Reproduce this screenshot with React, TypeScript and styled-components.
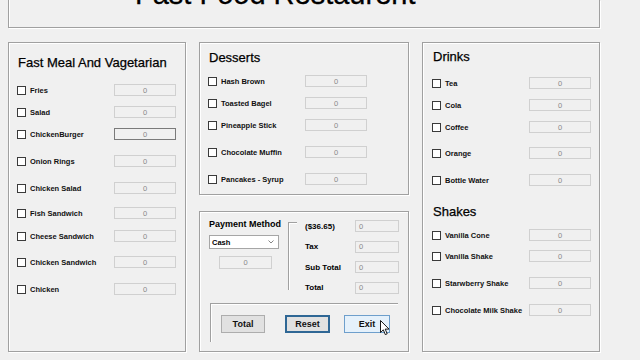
import React from 'react';
import styled, { createGlobalStyle } from 'styled-components';

type Item = { name: string; gap: number; active?: boolean };
type Section = { title: string; gap: number; items: Item[] };

const meals: Section[] = [
  {
    title: 'Fast Meal And Vagetarian',
    gap: 12,
    items: [
      { name: 'Fries', gap: 12 },
      { name: 'Salad', gap: 8 },
      { name: 'ChickenBurger', gap: 8, active: true },
      { name: 'Onion Rings', gap: 13 },
      { name: 'Chicken Salad', gap: 13 },
      { name: 'Fish Sandwich', gap: 11 },
      { name: 'Cheese Sandwich', gap: 9 },
      { name: 'Chicken Sandwich', gap: 12 },
      { name: 'Chicken', gap: 13 },
    ],
  },
];

const desserts: Section[] = [
  {
    title: 'Desserts',
    gap: 7,
    items: [
      { name: 'Hash Brown', gap: 8 },
      { name: 'Toasted Bagel', gap: 8 },
      { name: 'Pineapple Stick', gap: 8 },
      { name: 'Chocolate Muffin', gap: 13 },
      { name: 'Pancakes - Syrup', gap: 13 },
    ],
  },
];

const drinks: Section[] = [
  {
    title: 'Drinks',
    gap: 6,
    items: [
      { name: 'Tea', gap: 11 },
      { name: 'Cola', gap: 8 },
      { name: 'Coffee', gap: 8 },
      { name: 'Orange', gap: 12 },
      { name: 'Bottle Water', gap: 13 },
    ],
  },
  {
    title: 'Shakes',
    gap: 17,
    items: [
      { name: 'Vanilla Cone', gap: 8 },
      { name: 'Vanilla Shake', gap: 7 },
      { name: 'Starwberry Shake', gap: 13 },
      { name: 'Chocolate Milk Shake', gap: 13 },
    ],
  },
];

const totals = ['($36.65)', 'Tax', 'Sub Total', 'Total'];

const GlobalStyle = createGlobalStyle`
  html, body {
    margin: 0;
    padding: 0;
    background: #f0f0f0;
  }
  body {
    font-family: "Liberation Sans", Arial, sans-serif;
  }
`;

const Screen = styled.div`
  width: 640px;
  height: 360px;
  overflow: hidden;
  background: #f0f0f0;
  color: #000;
`;

const TitlePanel = styled.header`
  display: flex;
  box-sizing: border-box;
  margin-left: 8px;
  width: 592px;
  height: 28px;
  padding-left: 126px;
  border: 1px solid #a0a0a0;
  border-top: none;
  box-shadow: inset 1px 0 0 #fff, 1px 1px 0 #fff;
  overflow: hidden;
`;

const Title = styled.h1`
  margin: -20px 0 0;
  font-size: 29px;
  font-weight: normal;
  line-height: 1;
  white-space: nowrap;
  -webkit-text-stroke: 0.3px #000;
`;

const Columns = styled.main`
  display: grid;
  grid-template-columns: 178px 210px 178px;
  column-gap: 13px;
  margin: 14px 0 0 8px;
  height: 310px;
`;

const Stack = styled.div`
  display: flex;
  flex-direction: column;
  gap: 16px;
`;

const GroupBox = styled.section<{ $padX?: number; $height?: number; $grow?: boolean }>`
  box-sizing: border-box;
  display: flex;
  flex-direction: column;
  padding: 0 0 0 ${p => p.$padX ?? 8}px;
  border: 1px solid #a0a0a0;
  box-shadow: inset 1px 1px 0 #fff, 1px 1px 0 #fff;
  ${p => (p.$height ? `height: ${p.$height}px;` : '')}
  ${p => (p.$grow ? 'flex: 1;' : '')}
`;

const Heading = styled.h2<{ $gap: number }>`
  margin: ${p => p.$gap}px 0 0 1px;
  font-size: 13px;
  font-weight: normal;
  line-height: 16px;
  white-space: nowrap;
  -webkit-text-stroke: 0.25px #000;
`;

const Row = styled.div<{ $gap: number }>`
  display: flex;
  align-items: center;
  height: 14px;
  margin-top: ${p => p.$gap}px;
`;

const Check = styled.span`
  flex: none;
  box-sizing: border-box;
  width: 9px;
  height: 9px;
  border: 1px solid #3a3a3a;
  background: #fff;
`;

const ItemLabel = styled.span`
  width: 84px;
  margin-left: 4px;
  font-size: 7.5px;
  font-weight: bold;
  color: #111;
  white-space: nowrap;
`;

const Field = styled.div<{ $w: number; $align?: 'left' | 'center'; $active?: boolean }>`
  flex: none;
  box-sizing: border-box;
  display: flex;
  align-items: center;
  justify-content: ${p => (p.$align === 'left' ? 'flex-start' : 'center')};
  width: ${p => p.$w}px;
  height: 12px;
  padding-left: ${p => (p.$align === 'left' ? 3 : 0)}px;
  border: 1px solid ${p => (p.$active ? '#7a7a7a' : '#d0d0d0')};
  background: #f0f0f0;
  font-size: 7.5px;
  color: #888;
`;

const PaymentTop = styled.div`
  display: flex;
  align-items: flex-start;
  height: 91px;
  padding-left: 1px;
`;

const MethodCol = styled.div`
  display: flex;
  flex-direction: column;
  width: 79px;
`;

const MethodLabel = styled.span`
  margin-top: 7px;
  font-size: 9px;
  font-weight: bold;
  line-height: 11px;
  white-space: nowrap;
`;

const Combo = styled.div`
  box-sizing: border-box;
  display: flex;
  align-items: center;
  justify-content: space-between;
  width: 70px;
  height: 14px;
  margin-top: 5px;
  padding: 0 4px 0 2px;
  border: 1px solid #a6a6a6;
  background: #fff;
  font-size: 7.5px;
  font-weight: bold;
`;

const CashField = styled(Field)`
  margin: 7px 0 0 10px;
  height: 13px;
`;

const Divider = styled.div`
  box-sizing: border-box;
  width: 9px;
  height: 68px;
  margin-top: 10px;
  border-top: 1px solid #a0a0a0;
  border-left: 1px solid #a0a0a0;
  box-shadow: inset 1px 1px 0 #fff;
`;

const TotalsGrid = styled.div`
  display: grid;
  grid-template-columns: 50px 44px;
  grid-auto-rows: 12px;
  row-gap: 8.5px;
  align-items: center;
  margin: 8px 0 0 8px;
`;

const TotalLabel = styled.span`
  font-size: 8px;
  font-weight: bold;
  white-space: nowrap;
`;

const ButtonBar = styled.div`
  box-sizing: border-box;
  display: flex;
  align-items: flex-start;
  width: 188px;
  height: 39px;
  margin-left: 2px;
  padding: 11px 0 0 10px;
  border-top: 1px solid #a0a0a0;
  border-left: 1px solid #a0a0a0;
  box-shadow: inset 1px 1px 0 #fff;
`;

const Button = styled.button<{ $w: number; $gap: number; $state?: 'focus' | 'hover' }>`
  position: relative;
  box-sizing: border-box;
  width: ${p => p.$w}px;
  height: 18px;
  margin-left: ${p => p.$gap}px;
  padding: 0;
  font-family: "Liberation Sans", Arial, sans-serif;
  font-size: 9px;
  font-weight: bold;
  color: #111;
  background: ${p => (p.$state === 'hover' ? '#e5f1fb' : '#e1e1e1')};
  border: ${p =>
    p.$state === 'focus'
      ? '2px solid #2f6795'
      : p.$state === 'hover'
      ? '1px solid #6e9fcc'
      : '1px solid #adadad'};
`;

const Cursor = styled.svg`
  position: absolute;
  left: 35px;
  top: 4px;
`;

function ItemSection({ section }: { section: Section }) {
  return (
    <>
      <Heading $gap={section.gap}>{section.title}</Heading>
      {section.items.map(item => (
        <Row key={item.name} $gap={item.gap}>
          <Check />
          <ItemLabel>{item.name}</ItemLabel>
          <Field $w={62} $active={item.active}>
            0
          </Field>
        </Row>
      ))}
    </>
  );
}

export default function App() {
  return (
    <Screen>
      <GlobalStyle />
      <TitlePanel>
        <Title>Fast Food Restaurent</Title>
      </TitlePanel>
      <Columns>
        <GroupBox>
          {meals.map(s => (
            <ItemSection key={s.title} section={s} />
          ))}
        </GroupBox>
        <Stack>
          <GroupBox $height={153}>
            {desserts.map(s => (
              <ItemSection key={s.title} section={s} />
            ))}
          </GroupBox>
          <GroupBox $grow>
            <PaymentTop>
              <MethodCol>
                <MethodLabel>Payment Method</MethodLabel>
                <Combo>
                  <span>Cash</span>
                  <svg width="6" height="4" viewBox="0 0 6 4">
                    <polyline points="0.5,0.5 3,3 5.5,0.5" fill="none" stroke="#777" strokeWidth="0.9" />
                  </svg>
                </Combo>
                <CashField $w={53}>0</CashField>
              </MethodCol>
              <Divider />
              <TotalsGrid>
                {totals.map(t => (
                  <React.Fragment key={t}>
                    <TotalLabel>{t}</TotalLabel>
                    <Field $w={44} $align="left">
                      0
                    </Field>
                  </React.Fragment>
                ))}
              </TotalsGrid>
            </PaymentTop>
            <ButtonBar>
              <Button $w={44} $gap={0}>
                Total
              </Button>
              <Button $w={45} $gap={20} $state="focus">
                Reset
              </Button>
              <Button $w={46} $gap={14} $state="hover">
                Exit
                <Cursor width="11" height="16" viewBox="0 0 11 16">
                  <path
                    d="M0.5 0.5 L0.5 12.5 L3.3 9.8 L5.3 14.6 L7.2 13.8 L5.2 9.1 L9 9.1 Z"
                    fill="#fff"
                    stroke="#000"
                    strokeWidth="0.9"
                    strokeLinejoin="round"
                  />
                </Cursor>
              </Button>
            </ButtonBar>
          </GroupBox>
        </Stack>
        <GroupBox $padX={9}>
          {drinks.map(s => (
            <ItemSection key={s.title} section={s} />
          ))}
        </GroupBox>
      </Columns>
    </Screen>
  );
}
